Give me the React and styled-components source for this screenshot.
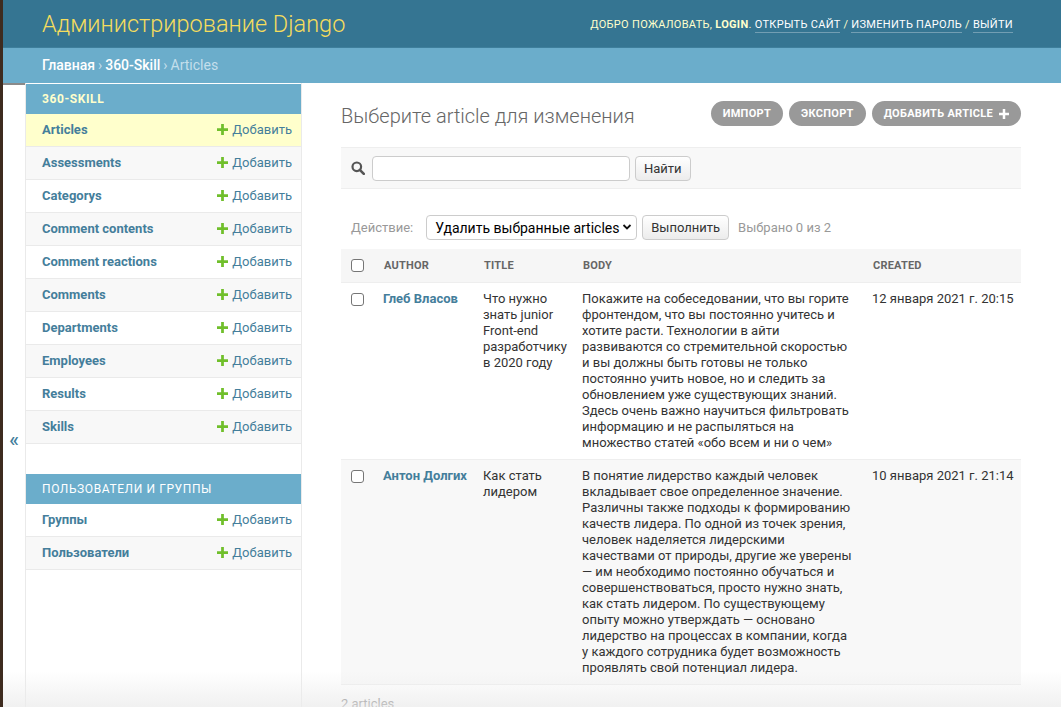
import React from 'react';
import styled, { createGlobalStyle } from 'styled-components';

const GlobalStyle = createGlobalStyle`
  html, body {
    margin: 0;
    padding: 0;
    background: #fff;
  }
  body {
    font-family: Roboto, "Liberation Sans", Arial, sans-serif;
    font-size: 14px;
    color: #333;
    overflow: hidden;
  }
  * {
    box-sizing: border-box;
  }
`;

const Frame = styled.div`
  border-left: 3px solid #3e2b1f;
  height: 707px;
  overflow: hidden;
  position: relative;
`;

const Header = styled.header`
  display: flex;
  align-items: center;
  justify-content: space-between;
  height: 47px;
  padding: 0 48px 0 39px;
  background: #357592;
`;

const Branding = styled.h1`
  margin: 0;
  font-size: 23.5px;
  font-weight: 300;
  color: #f5dd5d;
`;

const UserTools = styled.div`
  font-size: 11px;
  letter-spacing: 0.3px;
  text-transform: uppercase;
  color: #ffc;
  padding-top: 2px;
`;

const ToolLink = styled.a`
  color: #fff;
  text-decoration: none;
  border-bottom: 1px solid rgba(255, 255, 255, 0.3);
  padding-bottom: 1px;
`;

const Breadcrumbs = styled.nav`
  height: 36px;
  display: flex;
  align-items: center;
  padding: 0 39px 1px;
  background: #6badcb;
  color: #c4dfec;
  font-size: 14px;
  border-top: 1px solid #3e7f9c;
`;

const Crumb = styled.a`
  color: #fff;
  text-decoration: none;
  font-weight: 500;
`;

const Sep = styled.span`
  margin: 0 3px;
  color: #c4dfec;
`;

const Main = styled.div`
  display: flex;
  align-items: flex-start;
`;

const Toggle = styled.div`
  width: 22px;
  height: 707px;
  flex: none;
  display: flex;
  align-items: center;
  justify-content: center;
  border-top: 2px solid #8a8a8a;
  color: #447e9b;
  font-size: 20px;
  font-weight: 500;
  padding-top: 2px;
`;

const Sidebar = styled.div`
  width: 277px;
  flex: none;
  min-height: 707px;
  border-left: 1px solid #eaeaea;
  border-right: 1px solid #eaeaea;
  padding-top: 1px;
`;

const Module = styled.div`
  margin-bottom: 30px;
`;

const Caption = styled.div`
  height: 30px;
  display: flex;
  align-items: center;
  padding: 0 16px;
  background: #6badcb;
  color: ${(p) => (p.current ? '#ffc' : '#fff')};
  font-size: 12px;
  font-weight: ${(p) => (p.current ? 700 : 400)};
  letter-spacing: 0.6px;
  text-transform: uppercase;
`;

const ModelRow = styled.div`
  height: 33px;
  display: flex;
  align-items: center;
  justify-content: space-between;
  padding: 0 9px 2px 16px;
  border-bottom: 1px solid #eaeaea;
  background: ${(p) => (p.current ? '#ffc' : p.odd ? '#f8f8f8' : '#fff')};
  font-size: 13px;
`;

const ModelName = styled.a`
  color: #447e9b;
  font-weight: 700;
  text-decoration: none;
`;

const AddLink = styled.a`
  display: flex;
  align-items: center;
  gap: 4px;
  color: #447e9b;
  text-decoration: none;
  font-size: 13px;
`;

const Content = styled.div`
  flex: 1;
  padding: 0 40px 0 39px;
`;

const TitleBar = styled.div`
  display: flex;
  align-items: center;
  justify-content: space-between;
  height: 64px;
  padding-top: 1px;
`;

const Title = styled.h2`
  margin: 0;
  font-size: 20px;
  font-weight: 300;
  color: #666;
`;

const ObjectTools = styled.div`
  display: flex;
  gap: 6px;
  margin-top: -4px;
`;

const ToolButton = styled.a`
  display: flex;
  align-items: center;
  gap: 6px;
  height: 25px;
  padding: 0 12px;
  border-radius: 15px;
  background: #999;
  color: #fff;
  font-size: 11px;
  font-weight: 700;
  letter-spacing: 0.3px;
  text-transform: uppercase;
  text-decoration: none;
`;

const Toolbar = styled.div`
  display: flex;
  align-items: center;
  gap: 5px;
  height: 42px;
  padding: 0 10px;
  background: #f8f8f8;
  border-top: 1px solid #eee;
  border-bottom: 1px solid #eee;
`;

const SearchInput = styled.input`
  width: 258px;
  height: 25px;
  border: 1px solid #ccc;
  border-radius: 4px;
  background: #fff;
  margin-left: 2px;
`;

const Button = styled.button`
  height: 25px;
  padding: 0 8px;
  border: 1px solid #ccc;
  border-radius: 4px;
  background: linear-gradient(#fff, #ececec);
  color: #333;
  font-family: Roboto, "Liberation Sans", Arial, sans-serif;
  font-size: 13px;
`;

const Actions = styled.div`
  display: flex;
  align-items: center;
  gap: 5px;
  height: 60px;
  padding: 17px 10px 0;
  font-size: 13px;
  color: #999;
`;

const SelectWrap = styled.div`
  position: relative;
  margin-left: 8px;
`;

const Select = styled.select`
  appearance: none;
  width: 211px;
  height: 25px;
  padding: 0 8px;
  border: 1px solid #ccc;
  border-radius: 4px;
  background: #fff;
  color: #000;
  font-family: Roboto, "Liberation Sans", Arial, sans-serif;
  font-size: 14px;
`;

const Chevron = styled.svg`
  position: absolute;
  right: 5px;
  top: 8px;
  pointer-events: none;
`;

const Counter = styled.span`
  margin-left: 4px;
`;

const Table = styled.table`
  width: 680px;
  table-layout: fixed;
  border-collapse: collapse;
  font-size: 13px;
`;

const Th = styled.th`
  height: 33px;
  padding: 0 6px 0 ${(p) => (p.check ? '10px' : '9px')};
  background: #f6f6f6;
  border-bottom: 1px solid #eee;
  color: #666;
  font-size: 11px;
  font-weight: 700;
  text-align: left;
  text-transform: uppercase;
  letter-spacing: 0.2px;
`;

const Tr = styled.tr`
  background: ${(p) => (p.odd ? '#f8f8f8' : '#fff')};
`;

const Td = styled.td`
  padding: 8px ${(p) => (p.wide ? '10px' : '6px')} 8px ${(p) => (p.check ? '10px' : '8px')};
  vertical-align: top;
  line-height: 16px;
  border-bottom: 1px solid #eee;
  color: #333;
  white-space: ${(p) => (p.nowrap ? 'nowrap' : 'normal')};
`;

const Check = styled.span`
  display: block;
  width: 13px;
  height: 13px;
  margin-top: ${(p) => (p.head ? '0' : '2px')};
  border: 1px solid #767676;
  border-radius: 3px;
  background: #fff;
`;

const AuthorLink = styled.a`
  color: #447e9b;
  font-weight: 700;
  text-decoration: none;
`;

const Paginator = styled.p`
  margin: 0;
  padding-top: 11px;
  font-size: 13px;
  color: #666;
`;

const Vignette = styled.div`
  position: absolute;
  left: 0;
  right: 0;
  bottom: 0;
  height: 36px;
  background: linear-gradient(rgba(240, 240, 240, 0), rgba(236, 236, 236, 0.75));
  pointer-events: none;
`;

const PlusIcon = ({ color = '#70bf2b', size = 11 }) => (
  <svg width={size} height={size} viewBox="0 0 12 12">
    <path d="M4.5 0h3v4.5H12v3H7.5V12h-3V7.5H0v-3h4.5z" fill={color} />
  </svg>
);

const SearchIcon = () => (
  <svg width="14" height="14" viewBox="0 0 14 14">
    <circle cx="5.8" cy="5.8" r="4.3" fill="none" stroke="#555" strokeWidth="2.2" />
    <path d="M8.8 8.8l4 4" stroke="#555" strokeWidth="2.6" strokeLinecap="round" />
  </svg>
);

const apps = [
  {
    name: '360-Skill',
    current: true,
    models: [
      'Articles',
      'Assessments',
      'Categorys',
      'Comment contents',
      'Comment reactions',
      'Comments',
      'Departments',
      'Employees',
      'Results',
      'Skills',
    ],
  },
  {
    name: 'Пользователи и группы',
    current: false,
    models: ['Группы', 'Пользователи'],
  },
];

const articles = [
  {
    author: 'Глеб Власов',
    title: 'Что нужно знать junior Front-end разработчику в 2020 году',
    body:
      'Покажите на собеседовании, что вы горите фронтендом, что вы постоянно учитесь и хотите расти. Технологии в айти развиваются со стремительной скоростью и вы должны быть готовы не только постоянно учить новое, но и следить за обновлением уже существующих знаний. Здесь очень важно научиться фильтровать информацию и не распыляться на множество статей «обо всем и ни о чем»',
    created: '12 января 2021 г. 20:15',
  },
  {
    author: 'Антон Долгих',
    title: 'Как стать лидером',
    body:
      'В понятие лидерство каждый человек вкладывает свое определенное значение. Различны также подходы к формированию качеств лидера. По одной из точек зрения, человек наделяется лидерскими качествами от природы, другие же уверены — им необходимо постоянно обучаться и совершенствоваться, просто нужно знать, как стать лидером. По существующему опыту можно утверждать — основано лидерство на процессах в компании, когда у каждого сотрудника будет возможность проявлять свой потенциал лидера.',
    created: '10 января 2021 г. 21:14',
  },
];

export default function App() {
  return (
    <Frame>
      <GlobalStyle />
      <Header>
        <Branding>Администрирование Django</Branding>
        <UserTools>
          Добро пожаловать, <strong>login</strong>.{' '}
          <ToolLink href="#">Открыть сайт</ToolLink> /{' '}
          <ToolLink href="#">Изменить пароль</ToolLink> /{' '}
          <ToolLink href="#">Выйти</ToolLink>
        </UserTools>
      </Header>
      <Breadcrumbs>
        <Crumb href="#">Главная</Crumb>
        <Sep>›</Sep>
        <Crumb href="#">360-Skill</Crumb>
        <Sep>›</Sep>
        Articles
      </Breadcrumbs>
      <Main>
        <Toggle>«</Toggle>
        <Sidebar>
          {apps.map((app) => (
            <Module key={app.name}>
              <Caption current={app.current}>{app.name}</Caption>
              {app.models.map((m, i) => (
                <ModelRow key={m} current={app.current && i === 0} odd={i % 2 === 1}>
                  <ModelName href="#">{m}</ModelName>
                  <AddLink href="#">
                    <PlusIcon />
                    Добавить
                  </AddLink>
                </ModelRow>
              ))}
            </Module>
          ))}
        </Sidebar>
        <Content>
          <TitleBar>
            <Title>Выберите article для изменения</Title>
            <ObjectTools>
              <ToolButton href="#">Импорт</ToolButton>
              <ToolButton href="#">Экспорт</ToolButton>
              <ToolButton href="#">
                Добавить article
                <PlusIcon color="#fff" size={10} />
              </ToolButton>
            </ObjectTools>
          </TitleBar>
          <Toolbar>
            <SearchIcon />
            <SearchInput type="text" />
            <Button>Найти</Button>
          </Toolbar>
          <Actions>
            Действие:
            <SelectWrap>
              <Select defaultValue="delete">
                <option value="delete">Удалить выбранные articles</option>
              </Select>
              <Chevron width="10" height="8" viewBox="0 0 10 8">
                <path d="M1.5 2l3.5 3.5L8.5 2" fill="none" stroke="#111" strokeWidth="1.8" />
              </Chevron>
            </SelectWrap>
            <Button>Выполнить</Button>
            <Counter>Выбрано 0 из 2</Counter>
          </Actions>
          <Table>
            <colgroup>
              <col style={{ width: 34 }} />
              <col style={{ width: 100 }} />
              <col style={{ width: 99 }} />
              <col style={{ width: 290 }} />
              <col style={{ width: 157 }} />
            </colgroup>
            <thead>
              <tr>
                <Th check>
                  <Check head />
                </Th>
                <Th>Author</Th>
                <Th>Title</Th>
                <Th>Body</Th>
                <Th>Created</Th>
              </tr>
            </thead>
            <tbody>
              {articles.map((a, i) => (
                <Tr key={a.author} odd={i % 2 === 1}>
                  <Td check>
                    <Check />
                  </Td>
                  <Td nowrap>
                    <AuthorLink href="#">{a.author}</AuthorLink>
                  </Td>
                  <Td>{a.title}</Td>
                  <Td wide>{a.body}</Td>
                  <Td nowrap>{a.created}</Td>
                </Tr>
              ))}
            </tbody>
          </Table>
          <Paginator>2 articles</Paginator>
        </Content>
      </Main>
      <Vignette />
    </Frame>
  );
}
